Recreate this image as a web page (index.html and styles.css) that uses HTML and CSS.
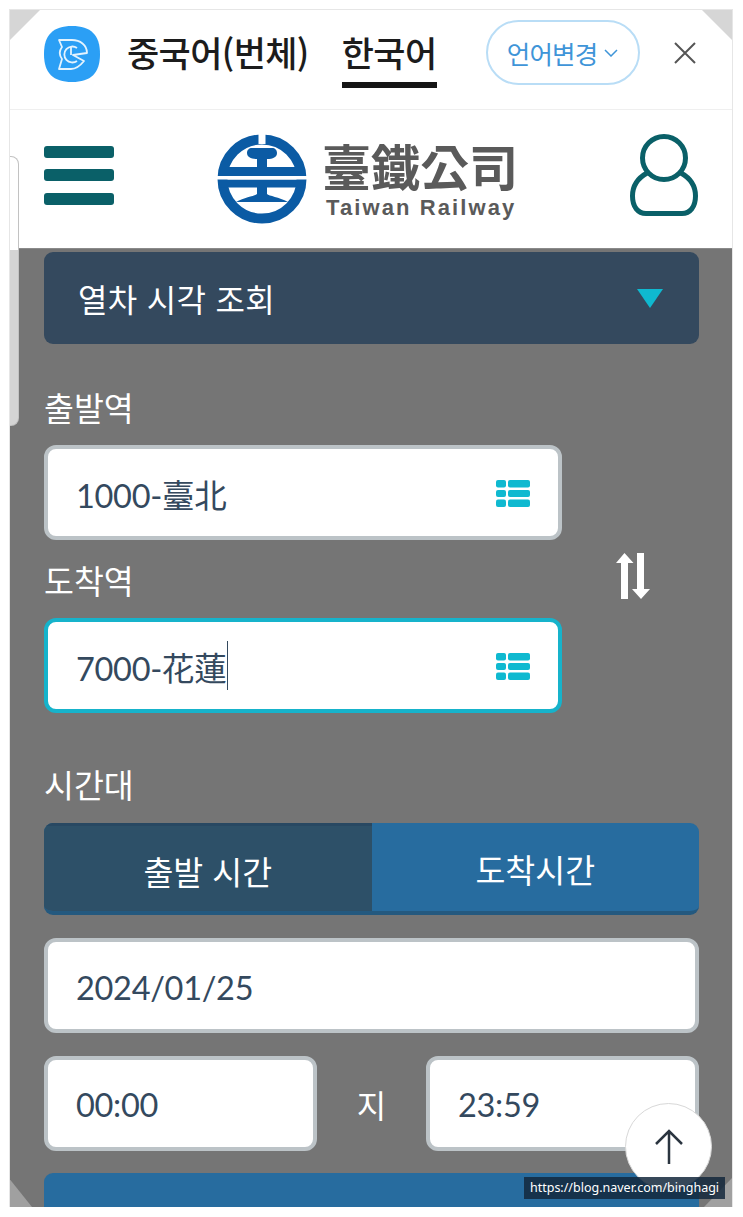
FILE: index.html
```html
<!DOCTYPE html>
<html lang="ko">
<head>
<meta charset="utf-8">
<title>열차 시각 조회</title>
<link rel="stylesheet" href="styles.css">
</head>
<body>
<div class="frame">
  <div class="banner">
    <svg class="app-icon" viewBox="0 0 56 56" width="56" height="56">
      <path d="M28 0C47 0 56 9 56 28S47 56 28 56 0 47 0 28 9 0 28 0Z" fill="#2b9ff5"/>
      <g fill="none" stroke="#e4f3fe" stroke-width="1.800" stroke-linejoin="round">
        <path d="M15 14H28C36 14 43 19 43 27L29 29 40 35C36 40 32 43 27 43H15L18 33C15 29 15 25 18 21Z"/>
        <path d="M33 22A8 8 0 1 0 33 35"/>
        <path d="M27 21V29"/>
      </g>
    </svg>
    <span class="lang lang-first">중국어(번체)</span>
    <span class="lang lang-active">한국어</span>
    <span class="lang-btn">언어변경
      <svg viewBox="0 0 14 8" width="14" height="8"><path d="M1 1L7 7 13 1" fill="none" stroke="#3f95d8" stroke-width="1.5"/></svg>
    </span>
    <svg class="close" viewBox="0 0 22 22" width="22" height="22"><path d="M1 1L21 21M21 1L1 21" stroke="#555" stroke-width="2"/></svg>
  </div>

  <header class="site-head">
    <div class="burger"><i></i><i></i><i></i></div>
    <div class="logo">
      <svg viewBox="0 0 90 90" width="90" height="90">
        <circle cx="45" cy="45" r="39.500" fill="none" stroke="#0b5ba4" stroke-width="10"/>
        <rect x="41.500" y="0" width="7" height="10" fill="#fff"/>
        <rect x="3" y="33" width="84" height="9" fill="#0b5ba4"/>
        <rect x="3" y="45.500" width="84" height="8" fill="#0b5ba4"/>
        <rect x="0" y="42" width="90" height="3.500" fill="#fff"/>
        <path d="M30 19C30 16 32 14 35 14H55C58 14 60 16 60 19 60 23 56 25 50 25V33H40V25C34 25 30 23 30 19Z" fill="#0b5ba4"/>
        <path d="M40 53H50V60C52 62 62 63 71 68H19C28 63 38 62 40 60Z" fill="#0b5ba4"/>
      </svg>
      <div class="logo-text">
        <span class="logo-zh">臺鐵公司</span>
        <span class="logo-en">Taiwan Railway</span>
      </div>
    </div>
    <svg class="user" viewBox="0 0 72 84" width="72" height="84">
      <circle cx="35" cy="24" r="21.500" fill="none" stroke="#0a6068" stroke-width="5"/>
      <path d="M18 39C9 44 3.500 52 3.500 62 3.500 73 9 79.500 17 79.500H53C61 79.500 66.500 73 66.500 62 66.500 52 61 44 52 39" fill="none" stroke="#0a6068" stroke-width="5" stroke-linecap="round"/>
    </svg>
  </header>

  <main class="content">
    <div class="select-bar">
      <span>열차 시각 조회</span>
      <i class="caret"></i>
    </div>

    <div class="stations">
      <div class="station-fields">
        <label class="field-label label-from">출발역</label>
        <div class="input station">
          <span>1000-臺北</span>
          <svg class="list" viewBox="0 0 34 27" width="34" height="27"><use href="#list-icon"/></svg>
        </div>
        <label class="field-label label-to">도착역</label>
        <div class="input station focus">
          <span class="typed">7000-花蓮</span>
          <svg class="list" viewBox="0 0 34 27" width="34" height="27"><use href="#list-icon"/></svg>
        </div>
      </div>
      <svg class="swap" viewBox="0 0 35 46" width="35" height="46">
        <path d="M8.500 0L17.500 10H12V46H5V10H0ZM21 0H28V36H34L25 46 16 36H21Z" fill="#fff"/>
      </svg>
    </div>

    <label class="field-label label-time">시간대</label>
    <div class="tabs">
      <div class="tab tab-on">출발 시간</div>
      <div class="tab">도착시간</div>
    </div>

    <div class="input date"><span>2024/01/25</span></div>

    <div class="time-row">
      <div class="input time"><span>00:00</span></div>
      <span class="to">지</span>
      <div class="input time"><span>23:59</span></div>
    </div>

    <div class="submit"></div>
  </main>

  <div class="scroll-tab"></div>
  <button class="to-top" aria-label="위로">
    <svg viewBox="0 0 30 36" width="30" height="36"><path d="M15 35V2M2 15L15 2 28 15" fill="none" stroke="#2b3540" stroke-width="2.500"/></svg>
  </button>
  <div class="fold fold-tl"></div>
  <div class="fold fold-tr"></div>
  <div class="fold fold-bl"></div>
  <div class="fold fold-br"></div>
</div>
<div class="watermark">https://blog.naver.com/binghagi</div>

<svg class="defs" width="0" height="0">
  <symbol id="list-icon" viewBox="0 0 34 27">
    <g fill="#0fb9d0">
      <rect x="0" y="0" width="10" height="7.500" rx="2"/>
      <rect x="0" y="10" width="10" height="7" rx="2"/>
      <rect x="0" y="19.500" width="10" height="7.500" rx="2"/>
      <rect x="12" y="0" width="22" height="7.500" rx="2"/>
      <rect x="12" y="10" width="22" height="7" rx="2"/>
      <rect x="12" y="19.500" width="22" height="7.500" rx="2"/>
    </g>
  </symbol>
</svg>
</body>
</html>
```
FILE: styles.css
```css
* { box-sizing: border-box; }
html, body { margin: 0; padding: 0; }
body {
  position: relative;
  width: 743px;
  height: 1217px;
  overflow: hidden;
  background: #fff;
  font-family: "Noto Sans CJK KR", "Noto Sans", sans-serif;
}
.frame {
  position: relative;
  width: 724px;
  height: 1198px;
  margin: 9px 0 0 9px;
  overflow: hidden;
  background: #757575;
  border: 1px solid #e6e6e6;
  border-bottom: 0;
}
.banner {
  display: flex;
  align-items: center;
  height: 100px;
  padding: 0 0 0 34px;
  background: #fff;
  border-bottom: 1px solid #efefef;
}
.app-icon { flex: none; margin-top: -12px; }
.lang {
  color: #1c1c1c;
  font-size: 35px;
  line-height: 48px;
  letter-spacing: -0.6px;
  white-space: nowrap;
}
.lang-first { margin: -16px 0 0 27px; font-weight: 500; }
.lang-active {
  position: relative;
  margin: -16px 0 0 33px;
  font-weight: 500;
}
.lang-active::after {
  content: "";
  position: absolute;
  left: 0;
  right: 0;
  top: 54px;
  height: 6px;
  background: #151515;
}
.lang-btn {
  display: flex;
  flex: none;
  align-items: center;
  justify-content: center;
  gap: 7px;
  width: 154px;
  height: 65px;
  margin: -14px 0 0 49px;
  color: #3f95d8;
  font-size: 25.500px;
  letter-spacing: -0.8px;
  border: 2px solid #b9ddf6;
  border-radius: 33px;
}
.close { flex: none; margin: -14px 0 0 34px; }
.site-head {
  display: flex;
  align-items: center;
  justify-content: space-between;
  height: 139px;
  padding: 0 31px 0 34px;
  background: #fff;
  border-bottom: 1px solid #8a8a8a;
}
.burger { display: flex; flex-direction: column; gap: 11.500px; width: 70px; margin-top: -8px; }
.burger i { display: block; height: 12px; border-radius: 3px; background: #0a6068; }
.logo { display: flex; align-items: center; gap: 17px; margin: 0 0 0 -9px; }
.logo-text { display: flex; flex-direction: column; width: 193px; color: #5a5a5a; }
.logo-zh {
  margin: 5px 0 0 -2px;
  font-family: "Liberation Sans", "Noto Sans CJK TC", sans-serif;
  font-size: 49px;
  line-height: 52px;
  font-weight: 700;
  white-space: nowrap;
}
.logo-en {
  margin: 1px 0 0 2px;
  font-family: "Liberation Sans", sans-serif;
  font-size: 22px;
  line-height: 24px;
  font-weight: 700;
  letter-spacing: 2.100px;
  white-space: nowrap;
}
.user { margin-top: -6px; }
.content { padding: 3px 33px 0 34px; }
.select-bar {
  display: flex;
  align-items: center;
  justify-content: space-between;
  height: 92px;
  padding: 0 36px 0 34px;
  color: #fff;
  font-size: 32px;
  letter-spacing: 0.3px;
  background: #34495e;
  border-radius: 9px;
}
.caret {
  width: 0;
  height: 0;
  border-left: 13px solid transparent;
  border-right: 13px solid transparent;
  border-top: 19px solid #0fb9d0;
}
.field-label {
  display: block;
  color: #fff;
  font-size: 32.500px;
  line-height: 44px;
}
.label-from { margin-top: 41px; }
.label-to { margin-top: 18px; }
.stations { display: flex; align-items: flex-start; padding-bottom: 49px; }
.station-fields { flex: none; width: 518px; }
.swap { margin: 209px 0 0 54px; }
.input {
  display: flex;
  align-items: center;
  height: 95px;
  background: #fff;
  border: 4px solid #bcc3c7;
  border-radius: 12px;
  color: #34495e;
  font-family: "Lato", "Noto Sans CJK TC", sans-serif;
  font-size: 32.500px;
  letter-spacing: -0.3px;
}
.input span { padding-top: 2px; }
.input.date span { padding-top: 4px; }
.station { justify-content: space-between; padding: 0 28px 0 28px; margin-top: 16px; }
.list { margin-top: 2px; }
.focus { border-color: #16b3cb; }
.typed { padding-right: 1px; border-right: 1.500px solid #34495e; }
.tabs {
  display: flex;
  height: 92px;
  margin-top: 17px;
  overflow: hidden;
  background: #276c9f;
  border-radius: 9px;
  border-bottom: 4px solid #24597f;
}
.tab {
  display: flex;
  flex: 1;
  align-items: center;
  justify-content: center;
  padding-top: 3px;
  color: #fff;
  font-size: 32.500px;
}
.tab-on { background: #2d5068; border-top: 3px solid #284862; }
.date { margin-top: 23px; padding-left: 28px; }
.time-row { display: flex; align-items: center; justify-content: space-between; margin-top: 23px; }
.time { width: 273px; padding-left: 28px; }
.to { color: #fff; font-size: 32px; }
.submit { height: 80px; margin-top: 22px; background: #276c9f; border-radius: 9px 9px 0 0; }
.scroll-tab {
  position: absolute;
  left: -1px;
  top: 146px;
  width: 10px;
  height: 270px;
  background: linear-gradient(#fff 93px, #d4d4d4 93px);
  border: 1px solid #c2c2c2;
  border-left: 0;
  border-radius: 0 8px 8px 0;
}
.to-top {
  position: absolute;
  left: 615px;
  top: 1093px;
  display: flex;
  align-items: center;
  justify-content: center;
  width: 87px;
  height: 87px;
  padding: 0;
  background: #fff;
  border: 1px solid #d8d8d8;
  border-radius: 50%;
}
.fold { position: absolute; width: 32px; height: 32px; background: #d6d6d6; }
.fold-tl { left: -1px; top: -1px; clip-path: polygon(0 0, 100% 0, 0 100%); }
.fold-tr { right: -1px; top: -1px; clip-path: polygon(0 0, 100% 0, 100% 100%); }
.fold-bl { left: -2px; bottom: 0; width: 24px; height: 30px; background: #a0a0a0; clip-path: polygon(0 0, 100% 100%, 0 100%); }
.fold-br { right: -1px; bottom: 0; width: 29px; height: 30px; background: #a0a0a0; clip-path: polygon(100% 0, 100% 100%, 0 100%); }
.watermark {
  position: absolute;
  left: 524px;
  top: 1177px;
  width: 201px;
  height: 22px;
  color: #fff;
  background: rgba(20, 40, 60, 0.85);
  font-family: "Noto Sans", sans-serif;
  font-size: 12.500px;
  line-height: 22px;
  text-align: center;
  white-space: nowrap;
}
.defs { position: absolute; }
```
